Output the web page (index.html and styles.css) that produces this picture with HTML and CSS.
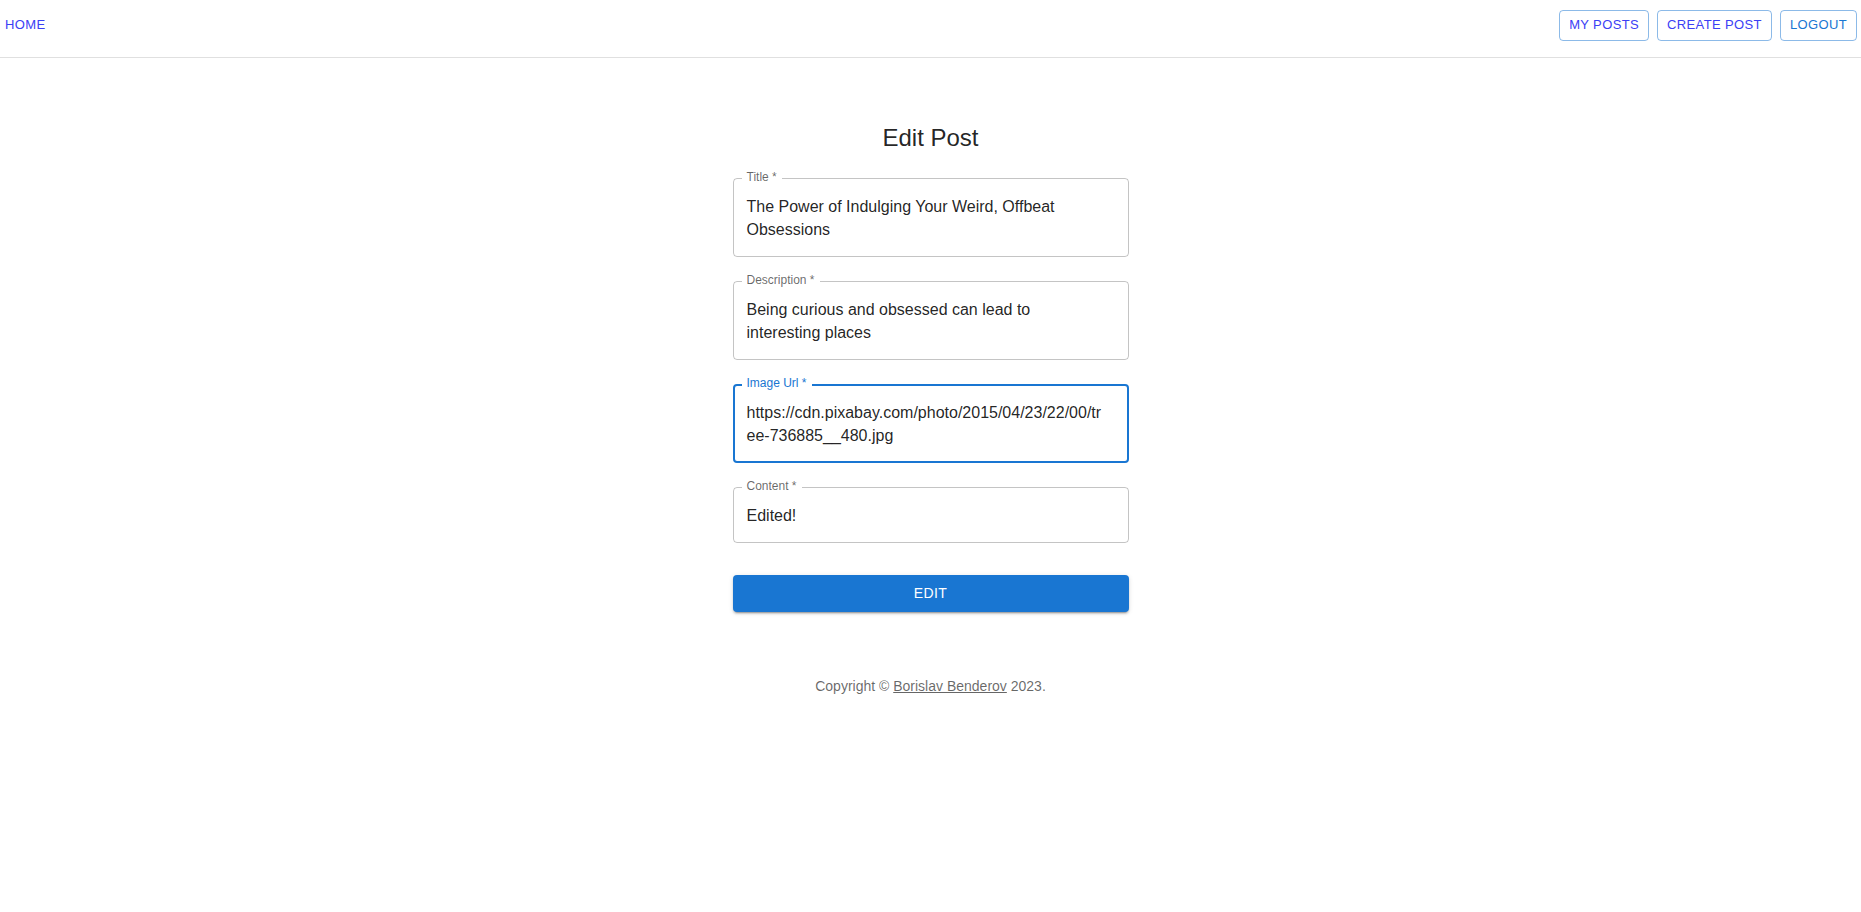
FILE: index.html
```html
<!DOCTYPE html>
<html lang="en">
<head>
<meta charset="utf-8">
<title>Edit Post</title>
<link rel="stylesheet" href="styles.css">
</head>
<body>
<header class="topbar">
  <a class="home-btn" href="#">Home</a>
  <nav class="nav-actions">
    <a class="outline-btn link-color" href="#">My Posts</a>
    <a class="outline-btn link-color" href="#">Create Post</a>
    <a class="outline-btn primary-color" href="#">Logout</a>
  </nav>
</header>
<main class="container">
  <h1 class="page-title">Edit Post</h1>
  <form class="edit-form">
    <div class="field">
      <span class="field-label">Title *</span>
      <div class="field-value">The Power of Indulging Your Weird, Offbeat Obsessions</div>
    </div>
    <div class="field">
      <span class="field-label">Description *</span>
      <div class="field-value">Being curious and obsessed can lead to interesting places</div>
    </div>
    <div class="field focused">
      <span class="field-label">Image Url *</span>
      <div class="field-value">https://cdn.pixabay.com/photo/2015/04/23/22/00/tree-736885__480.jpg</div>
    </div>
    <div class="field">
      <span class="field-label">Content *</span>
      <div class="field-value">Edited!</div>
    </div>
    <button type="button" class="submit-btn">Edit</button>
  </form>
  <p class="copyright">Copyright © <a href="#">Borislav Benderov</a> 2023.</p>
</main>
</body>
</html>
```
FILE: styles.css
```css
* { box-sizing: border-box; }

body {
  margin: 0;
  font-family: "Liberation Sans", Arial, sans-serif;
  color: rgba(0, 0, 0, 0.87);
  background: #fff;
}

.topbar {
  box-sizing: content-box;
  height: 47px;
  padding: 10px 4px 0 0;
  border-bottom: 1px solid #e0e0e0;
  display: flex;
  justify-content: space-between;
  align-items: flex-start;
}

.home-btn {
  display: inline-block;
  padding: 4px 5px;
  font-size: 13px;
  line-height: 22.75px;
  letter-spacing: 0.37px;
  text-transform: uppercase;
  text-decoration: none;
  color: #3b40f5;
}

.nav-actions {
  display: flex;
  gap: 8px;
}

.outline-btn {
  display: inline-block;
  min-width: 64px;
  padding: 3px 9px;
  border: 1px solid rgba(25, 118, 210, 0.5);
  border-radius: 4px;
  font-size: 13px;
  line-height: 22.75px;
  letter-spacing: 0.37px;
  text-transform: uppercase;
  text-decoration: none;
  text-align: center;
}

.link-color { color: #3b40f5; }
.primary-color { color: #1976d2; }

.container {
  width: 396px;
  margin: 0 auto;
  padding-top: 64px;
}

.page-title {
  margin: 0;
  font-size: 24px;
  line-height: 32px;
  font-weight: 400;
  text-align: center;
}

.edit-form {
  margin-top: 8px;
  display: flex;
  flex-direction: column;
}

.field {
  position: relative;
  margin: 16px 0 8px;
  padding: 15.5px 22px 15.5px 13px;
  border: 1px solid rgba(0, 0, 0, 0.23);
  border-radius: 4px;
}

.field-label {
  position: absolute;
  left: 8px;
  top: -8px;
  padding: 0 5px;
  background: #fff;
  font-size: 12px;
  line-height: 12px;
  color: rgba(0, 0, 0, 0.6);
}

.field-value {
  font-size: 16px;
  line-height: 23px;
  overflow-wrap: break-word;
}

.field.focused {
  border: 2px solid #1976d2;
  padding: 14.5px 21px 14.5px 12px;
}

.field.focused .field-label {
  left: 7px;
  top: -9px;
  color: #1976d2;
}

.submit-btn {
  display: block;
  width: 100%;
  margin: 24px 0 16px;
  padding: 6px 16px;
  border: none;
  border-radius: 4px;
  background: #1976d2;
  color: #fff;
  font-family: inherit;
  font-size: 14px;
  line-height: 24.5px;
  letter-spacing: 0.4px;
  text-transform: uppercase;
  box-shadow: 0 3px 1px -2px rgba(0, 0, 0, 0.2), 0 2px 2px 0 rgba(0, 0, 0, 0.14), 0 1px 5px 0 rgba(0, 0, 0, 0.12);
}

.copyright {
  margin: 48px 0 0;
  font-size: 14px;
  line-height: 20px;
  text-align: center;
  color: rgba(0, 0, 0, 0.6);
}

.copyright a {
  color: inherit;
}
```
